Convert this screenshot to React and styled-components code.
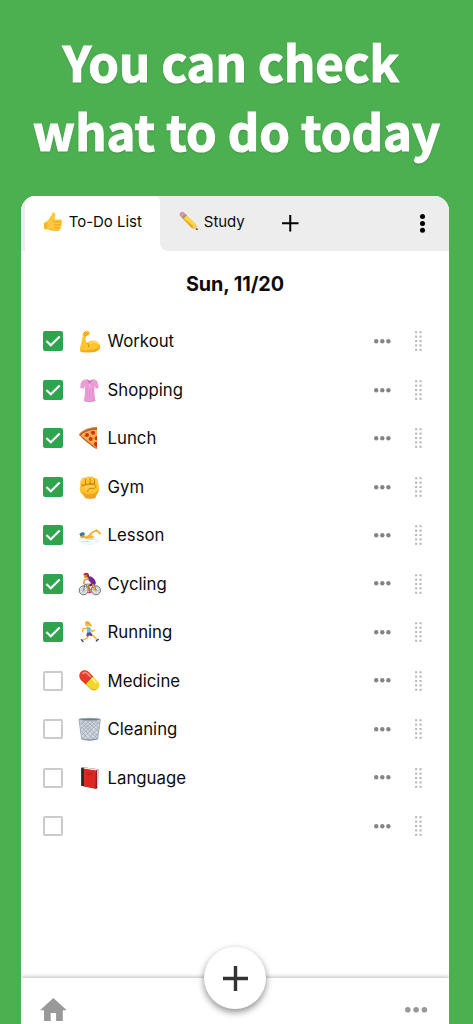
import React from "react";
import styled, { createGlobalStyle } from "styled-components";

const GlobalStyle = createGlobalStyle`
  * {
    box-sizing: border-box;
  }
  body {
    margin: 0;
    background: #4caf50;
  }
  svg {
    overflow: visible;
    flex: none;
  }
`;

// styled components
const Page = styled.div`
  height: 1024px;
  overflow: hidden;
  display: flex;
  flex-direction: column;
  background: #4caf50;
  font-family: Inter, "Liberation Sans", sans-serif;
  color: #0c0c0c;
`;
const Headline = styled.h1`
  height: 196.3px;
  margin: 0;
  padding-top: 26px;
  flex: none;
  color: #fff;
  font: 700 49px/69px "Noto Sans CJK JP", sans-serif;
  -webkit-text-stroke: 1.2px #fff;
  text-align: center;
  text-shadow: 0 1px 2px rgba(0, 0, 0, 0.3);
`;
const HeadlineRow = styled.span`
  display: block;
  white-space: nowrap;
  margin-left: ${(props) => props.$shift}px;
`;
const Panel = styled.div`
  flex: 1;
  display: flex;
  flex-direction: column;
  margin: 0 23.6px 0 20.6px;
  background: #fff;
  border-radius: 15px 15px 0 0;
  overflow: hidden;
`;
const TabBar = styled.div`
  display: flex;
  flex: none;
  height: 54.3px;
  padding-left: 4.4px;
  background: linear-gradient(to right, #ededed 4.4px, #fff 0);
`;
const Tab = styled.div`
  display: flex;
  align-items: center;
  gap: 5px;
  padding-bottom: 4px;
  font-size: 15px;
  letter-spacing: -0.02px;
  white-space: nowrap;
`;
const ActiveTabBack = styled.div`
  width: 135px;
  display: flex;
  background: #ededed;
`;
const ActiveTab = styled(Tab)`
  flex: 1;
  gap: 5.7px;
  padding-left: 19px;
  background: #fff;
  border-radius: 0 6px 0 0;
`;
const TabRest = styled.div`
  flex: 1;
  display: flex;
  align-items: center;
  padding: 0 24.4px 0 18.8px;
  background: #ededed;
  border-radius: 0 0 0 8px;
`;
const AddTab = styled.span`
  display: flex;
  margin-left: 37.7px;
  margin-right: auto;
`;
const DateTitle = styled.h2`
  height: 66.5px;
  flex: none;
  margin: 0;
  font-size: 19.8px;
  font-weight: 700;
  line-height: 66px;
  letter-spacing: -0.08px;
  text-align: center;
`;
const TodoList = styled.ul`
  flex: 1;
  margin: 0;
  padding: 0;
  list-style: none;
`;
const TodoRow = styled.li`
  display: flex;
  align-items: center;
  height: 48.47px;
  padding: 0 27.3px 0 22.8px;
  font-size: 16.75px;
`;
const Checkbox = styled.span`
  width: 20px;
  height: 20px;
  flex: none;
  display: flex;
  border-radius: 2px;
  background: ${(props) => (props.$checked ? "#2ea44f" : "#fff")};
  border: ${(props) => (props.$checked ? "none" : "2px solid #cbcbcb")};
`;
const EmojiSlot = styled.span`
  width: 24px;
  height: 24px;
  margin: 0 5.6px 0 14.6px;
  flex: none;
  display: flex;
`;
const TodoName = styled.span`
  flex: 1;
`;
const DragHandle = styled.span`
  display: flex;
  margin-left: 24.2px;
`;
const BottomBar = styled.div`
  display: flex;
  justify-content: space-between;
  flex: none;
  height: 45.6px;
  position: relative;
  padding: 19.2px 22.6px 0 19.9px;
  background: #fff;
  box-shadow: 0 -1px 4px rgba(0, 0, 0, 0.27);
`;
const MoreButton = styled.span`
  display: flex;
  padding-top: 9.6px;
`;
const AddButton = styled.button`
  position: absolute;
  left: 50%;
  top: -31px;
  width: 62px;
  height: 62px;
  margin-left: -31px;
  padding: 0;
  border: 0;
  border-radius: 50%;
  display: flex;
  align-items: center;
  justify-content: center;
  background: #fff;
  box-shadow: 0 3px 7px rgba(0, 0, 0, 0.45);
`;

// every emoji is drawn on a 72 x 72 grid
const emojis = {
  thumb: (
    <>
      <path d="M2 40c5-3 10-5 14-10 6-8 12-14 15-25 1-5 10-5 12 3 1 8-2 14-3 20h22c8 0 9 9 3 11 6 2 5 11-1 11 5 3 2 10-2 11 2 5 0 9-6 9H35c-8 0-13-3-20-5H2z" fill="#ffc83a" />
      <path d="M2 40c6-2 10 0 11 3v20c-4 3-7 3-11 2-3-6-4-19 0-25z" fill="#f7b52c" />
      <path d="M38 38c6-2 15-2 24 0M40 49h22M40 60h18" fill="none" stroke="#d58a18" strokeWidth="2.5" strokeLinecap="round" />
      <path d="M40 28c-4 1-6 4-5 8M18 64c8 4 14 6 22 6h15" fill="none" stroke="#e69f22" strokeWidth="2.5" />
    </>
  ),
  pencil: (
    <>
      <path d="M8 12 15 4 61 48 68 69 47 61 3 17z" fill="#f9b916" />
      <path d="M12 20 20 11 61 49 54 55z" fill="#ffd84a" />
      <path d="M7 21 12 25 53 63 47 61z" fill="#d98709" />
      <path d="M3 16C-1 9 8 0 16 4l6 6L9 22z" fill="#ef8d9c" />
      <path d="M9 22 22 9l6 6-13 13z" fill="#96a8b8" />
      <path d="m12 25 13-13M15 27l12-12" stroke="#637486" strokeWidth="1.5" />
      <path d="m47 61 14-13 7 21z" fill="#edc893" />
      <path d="m60 66 5-5 3 8z" fill="#333" />
    </>
  ),
  arm: (
    <>
      <path d="M18 9c4-6 15-5 17 1 1 6-2 10-7 11l-4 1c-2 8-1 15 3 21 6-8 20-11 30-5 10 7 12 18 4 25-8 7-24 8-38 7-8 0-17 0-17-6-1-7 2-14 4-22 2-9 4-16 4-23 0-4 1-7 4-10z" fill="#ffc52e" />
      <path d="M6 62c1 7 11 8 20 8 14 0 28-1 36-7 5-5 6-11 3-16-3 10-11 14-23 15-13 2-26 4-36 0z" fill="#f2a922" />
      <path d="M28 42c3 3 4 7 4 11M19 10l6 6 6-5M23 21l-5-4" fill="none" stroke="#c9780e" strokeWidth="2.2" strokeLinecap="round" />
      <path d="M36 43c8-6 18-7 23 0" fill="none" stroke="#ffdd63" strokeWidth="5" strokeLinecap="round" />
    </>
  ),
  shirt: (
    <>
      <path d="M25 4C16 5 10 9 8 17L7 28l10 3 3-7c3 14-1 29-2 44 10 4 24 4 34 0-1-15-5-30-2-44l3 7 9-3-2-11C59 9 54 5 46 4l-10 5z" fill="#eb9dd6" />
      <path d="M25 4c1 8 5 14 10 17 6-4 9-9 11-17l-10 4z" fill="#c873b1" />
      <path d="m25 5 10 16L46 5M35 21v8" fill="none" stroke="#fac8eb" strokeWidth="2" />
      <path d="M27 29c2 12 0 26-1 38m19-38c-2 12 0 26 1 38M35 35v32" fill="none" stroke="#dc84c4" strokeWidth="1.6" />
      <path d="m7 28 10 3m36 0 9-3M18 68c10 4 24 4 34 0" fill="none" stroke="#c877b1" strokeWidth="1.8" />
    </>
  ),
  pizza: (
    <>
      <path d="M4 24C17 10 35 4 57 3v9C38 13 19 18 8 31c-4 0-5-4-4-7z" fill="#ba6527" />
      <path d="M5 24C18 12 36 5 56 5" fill="none" stroke="#d99a50" strokeWidth="2" />
      <path d="M8 29C21 17 38 12 57 12v56C40 53 23 41 8 29z" fill="#f9b14c" />
      <path d="M9 29 56 67v3C41 60 22 46 8 32z" fill="#b95f1c" />
      <g fill="#d42c20">
        <circle cx="27" cy="27" r="6" />
        <circle cx="45" cy="20" r="6" />
        <circle cx="38" cy="39" r="6" />
        <path d="M57 30c-9 1-9 13 0 13zM57 49c-8-3-12 5-8 9l8 8z" />
      </g>
      <path d="m35 20 3-2M17 30h4m27 5v5m-13-9 3-2" stroke="#a0722a" strokeWidth="2.5" />
    </>
  ),
  fist: (
    <>
      <path d="M9 15c2-6 9-9 14-6 3-6 11-6 14-2 4-4 11-2 12 3 6-2 11 2 11 8l3 20c1 11-6 18-9 24-1 3-1 6-3 7-8 3-21 3-29 0-2-2-2-5-5-7C10 56 5 50 5 41c0-6 2-8 3-12-2-5-1-10 1-14z" fill="#ffc42d" />
      <path d="M7 45c3 8 9 11 12 18 1 3 1 5 3 6 8 3 21 3 29 0 2-1 2-4 3-7 3-6 9-11 9-21-5 9-13 15-25 16-13 1-25-3-31-12z" fill="#efa323" />
      <path d="M22 11l1 17m13-19 1 18M49 12l1 15M9 29c5 4 11 2 14-3 4 4 11 3 14-2 5 4 10 4 13 0" fill="none" stroke="#b86b0b" strokeWidth="2.2" strokeLinecap="round" />
      <path d="M13 33c11-5 27-7 37-3 6 3 3 10-3 10H35c-5 3-6 6-6 10" fill="#ffce48" stroke="#bf730f" strokeWidth="2.4" strokeLinecap="round" />
      <path d="M12 18c1-5 5-6 7-4m7-3c3-2 6-2 8 0m6 1c3-2 5 0 6 2m7 1c3 1 4 3 4 6" fill="none" stroke="#ffdf6a" strokeWidth="3" />
    </>
  ),
  swim: (
    <>
      <path d="M20 42c4-5 12-6 21-5 6 1 8 4 6 8-8 4-20 5-27 2z" fill="#ffb81d" />
      <path d="m33 38 13-12 11-4 9 10" fill="none" stroke="#f7ac20" strokeWidth="5" strokeLinecap="round" strokeLinejoin="round" />
      <circle cx="14" cy="38" r="7.5" fill="#f6ac26" />
      <path d="M4 36c2-9 12-11 17-4l-5 5c-4-2-7 0-12-1z" fill="#287ab8" />
      <path d="M6 39c4-3 7-2 9 1" fill="none" stroke="#275172" strokeWidth="2.5" />
      <path d="M1 48c8-3 14-2 21-1 12 2 23-4 45 1-2 8-15 17-34 17C15 65 6 57 1 48z" fill="#dff2f8" />
      <path d="M5 51c13 5 20-3 31 1s20-1 28-2M16 60c10 2 20-1 36 0" fill="none" stroke="#fff" strokeWidth="4" />
      <path d="M14 55c8 1 10-2 18 1m-4-8c9 2 15 1 22-1" fill="none" stroke="#9ecfdf" strokeWidth="1.6" />
    </>
  ),
  bike: (
    <>
      <g fill="#e6e7e8" stroke="#5d646b" strokeWidth="2.8">
        <circle cx="17" cy="55" r="13.5" />
        <circle cx="54" cy="55" r="13.5" />
      </g>
      <path d="M17 42v26M4 55h26M8 46l18 18M26 46 8 64M54 42v26M41 55h26M45 46l18 18M63 46 45 64" stroke="#92999f" strokeWidth="1.2" />
      <path d="m17 55 4-20 16 20 11-20-25 2m25-2 6 20M20 33h-5" fill="none" stroke="#77565c" strokeWidth="2.4" />
      <path d="M32 13c7-1 14 4 17 9 4 5 5 10 4 15l-9 2-13-15c-4-3-3-9 1-11z" fill="#762499" />
      <path d="m31 21-11 2-3 9" fill="none" stroke="#e4a02a" strokeWidth="4.5" strokeLinecap="round" />
      <path d="M44 36 31 42l5 17" fill="none" stroke="#b7702b" strokeWidth="5" strokeLinecap="round" />
      <path d="m48 35-13 6" stroke="#54266d" strokeWidth="6" />
      <path d="m45 38 4 14" stroke="#e4a02a" strokeWidth="5" strokeLinecap="round" />
      <circle cx="24" cy="12" r="6.5" fill="#d48a2c" />
      <path d="M16 9C17 1 30 0 33 7l-2 5-5-3z" fill="#c22647" />
      <path d="m28 10 5-1-1 7-4-1z" fill="#54301e" />
      <path d="m32 62 7-1" stroke="#db3860" strokeWidth="4" strokeLinecap="round" />
    </>
  ),
  run: (
    <>
      <path d="m27 25-12 1-1 9m22-9 6 9 8-4" fill="none" stroke="#ffb629" strokeWidth="4.2" strokeLinecap="round" strokeLinejoin="round" />
      <path d="M34 43 26 55l-14 6m24-18 11 5 10 11" fill="none" stroke="#ffb629" strokeWidth="4.6" strokeLinecap="round" strokeLinejoin="round" />
      <path d="M26 21c5-1 9 0 12 4v16l-11-1z" fill="#62c8ed" />
      <path d="m27 38 11-1 6 7-4 5-7-3-4 4-4-3z" fill="#68459b" />
      <circle cx="28" cy="13" r="7" fill="#ffc239" />
      <path d="M21 8c3-7 14-4 16 2 1 5 5 5 4 9-5 2-8-1-8-7-4 1-9-1-12-4z" fill="#f0a71e" />
      <path d="m10 59 5 6m40-2 6-5" stroke="#344486" strokeWidth="4" strokeLinecap="round" />
    </>
  ),
  pill: (
    <>
      <path d="M8 10c8-9 18-7 25 0l27 28c7 8 5 17-1 22-7 6-15 6-22 0L9 33C3 26 2 17 8 10z" fill="#f4d62c" />
      <path d="M8 10c8-9 18-7 25 0l12 12-22 24L9 33C3 26 2 17 8 10z" fill="#e83b2c" />
      <path d="M6 25c3 5 24 29 33 34 7 4 16 2 20-1-7 7-15 7-22 2L9 33c-2-3-3-5-3-8z" fill="#91231b" opacity=".35" />
      <path d="M15 13c4-4 9-3 13 1l9 8" fill="none" stroke="#ff9280" strokeWidth="5" strokeLinecap="round" />
      <path d="m42 28 12 13" stroke="#fff58e" strokeWidth="5" strokeLinecap="round" />
      <path d="M45 22c-9 4-18 13-22 24" fill="none" stroke="#bd451e" strokeWidth="1.5" />
    </>
  ),
  bin: (
    <>
      <path d="m3 7 8 59c12 5 36 5 48 0l8-59z" fill="#d3d9de" />
      <path d="m7 15 49 47M12 11l46 44M24 11l38 33M37 11l27 23M50 11l14 12M9 28l37 39M12 45l20 23M64 14 14 64M58 10 12 54M48 10 11 44M36 10 9 36M22 10 8 24M62 31 30 68M60 49 44 67" fill="none" stroke="#8591a0" strokeWidth="1.7" />
      <path d="M11 65c13 5 35 5 48 0" fill="none" stroke="#8496a9" strokeWidth="4.5" />
      <path d="m3 8 8 58M67 8l-8 58" stroke="#8f9ca8" strokeWidth="2.5" />
      <ellipse cx="35" cy="7" rx="32" ry="3" fill="#65717e" stroke="#919fab" strokeWidth="2.5" />
    </>
  ),
  book: (
    <>
      <path d="m10 5 7-1 44 6-1 55-6 3-44-9z" fill="#971a1b" />
      <path d="m17 4 43 6-6 4-37-6z" fill="#eeeae4" />
      <path d="m17 8 37 6-1 54-36-7z" fill="#dd2821" />
      <path d="m10 5 7 3v53l-7-2z" fill="#292326" />
      <path d="m54 14 3-2v54l-4 2z" fill="#8f1d1d" />
      <path d="m57 12 4-2-1 54-3 2z" fill="#d8d0c8" />
      <path d="m25 20 20 3M27 25l15 2" stroke="#a9211a" strokeWidth="2" />
    </>
  )
};

const todos = [
  { name: "Workout", emoji: "arm", done: true },
  { name: "Shopping", emoji: "shirt", done: true },
  { name: "Lunch", emoji: "pizza", done: true },
  { name: "Gym", emoji: "fist", done: true },
  { name: "Lesson", emoji: "swim", done: true },
  { name: "Cycling", emoji: "bike", done: true },
  { name: "Running", emoji: "run", done: true },
  { name: "Medicine", emoji: "pill", done: false },
  { name: "Cleaning", emoji: "bin", done: false },
  { name: "Language", emoji: "book", done: false },
  { name: "", emoji: null, done: false }
];

function Emoji({ name, size = 24 }) {
  return (
    <svg width={size} height={size} viewBox="0 0 72 72">
      {emojis[name]}
    </svg>
  );
}

function Plus({ size, stroke, color }) {
  const half = size / 2;
  return (
    <svg width={size} height={size}>
      <path d={`M${half} 0V${size}M0 ${half}H${size}`} stroke={color} strokeWidth={stroke} />
    </svg>
  );
}

// three dots in a line, horizontal unless told otherwise
function Dots({ r, step, color, vertical }) {
  const long = step * 2 + r * 2;
  const short = r * 2;
  return (
    <svg width={vertical ? short : long} height={vertical ? long : short}>
      {[0, 1, 2].map((i) => (
        <circle
          key={i}
          cx={vertical ? r : r + i * step}
          cy={vertical ? r + i * step : r}
          r={r}
          fill={color}
        />
      ))}
    </svg>
  );
}

function Handle() {
  return (
    <svg width="7" height="20" viewBox="0 0 7 20">
      {[0, 1, 2, 3, 4].map((i) => (
        <g key={i} fill="#b8b8b8">
          <rect x="0.1" y={0.2 + i * 4.38} width="2.1" height="2.1" />
          <rect x="4.5" y={0.2 + i * 4.38} width="2.1" height="2.1" />
        </g>
      ))}
    </svg>
  );
}

function Todo({ todo }) {
  return (
    <TodoRow>
      <Checkbox $checked={todo.done}>
        {todo.done && (
          <svg width="20" height="20">
            <path d="m3.4 10 4.4 4.3 8.9-8.7" fill="none" stroke="#fff" strokeWidth="2.1" />
          </svg>
        )}
      </Checkbox>
      <EmojiSlot>{todo.emoji && <Emoji name={todo.emoji} />}</EmojiSlot>
      <TodoName>{todo.name}</TodoName>
      <Dots r={2.2} step={6.1} color="#858585" />
      <DragHandle>
        <Handle />
      </DragHandle>
    </TodoRow>
  );
}

function App() {
  return (
    <Page>
      <GlobalStyle />
      <Headline>
        <HeadlineRow $shift={-11}>You can check</HeadlineRow>
        <HeadlineRow $shift={0}>what to do today</HeadlineRow>
      </Headline>
      <Panel>
        <TabBar>
          <ActiveTabBack>
            <ActiveTab>
              <Emoji name="thumb" size={19} />
              To-Do List
            </ActiveTab>
          </ActiveTabBack>
          <TabRest>
            <Tab>
              <Emoji name="pencil" size={20} />
              Study
            </Tab>
            <AddTab>
              <Plus size={16.5} stroke={2} color="#000" />
            </AddTab>
            <Dots r={2.5} step={6.9} color="#000" vertical />
          </TabRest>
        </TabBar>
        <DateTitle>Sun, 11/20</DateTitle>
        <TodoList>
          {todos.map((todo) => (
            <Todo key={todo.emoji ?? "empty"} todo={todo} />
          ))}
        </TodoList>
        <BottomBar>
          <svg width="26.8" height="23" viewBox="2 3 20 17" preserveAspectRatio="none">
            <path d="M10 20v-6h4v6h5v-8h3L12 3 2 12h3v8z" fill="#999" />
          </svg>
          <AddButton>
            <Plus size={25} stroke={3.4} color="#333" />
          </AddButton>
          <MoreButton>
            <Dots r={2.8} step={8.3} color="#999" />
          </MoreButton>
        </BottomBar>
      </Panel>
    </Page>
  );
}

export default App;
